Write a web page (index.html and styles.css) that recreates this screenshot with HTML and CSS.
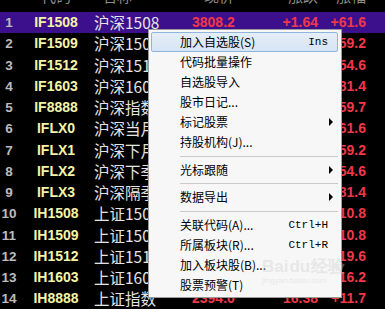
FILE: index.html
```html
<!DOCTYPE html>
<html>
<head>
<meta charset="utf-8">
<link rel="stylesheet" href="styles.css">
</head>
<body>
<div class="screen">
  <div class="head">
    <span class="h-num"></span><span class="h-code">代码</span><span class="h-name">名称</span><span class="h-price">现价</span><span class="h-chg">涨跌</span><span class="h-pct">涨幅</span>
  </div>
  <div class="row sel"><span class="num">1</span><span class="code">IF1508</span><span class="name">沪深1508</span><span class="price">3808.2</span><span class="chg">+1.64</span><span class="pct">+61.6</span></div>
  <div class="row"><span class="num">2</span><span class="code">IF1509</span><span class="name">沪深1509</span><span class="price">3796.2</span><span class="chg">+1.58</span><span class="pct">+59.2</span></div>
  <div class="row"><span class="num">3</span><span class="code">IF1512</span><span class="name">沪深1512</span><span class="price">3779.6</span><span class="chg">+1.47</span><span class="pct">+54.6</span></div>
  <div class="row"><span class="num">4</span><span class="code">IF1603</span><span class="name">沪深1603</span><span class="price">3785.0</span><span class="chg">+2.19</span><span class="pct">+81.4</span></div>
  <div class="row"><span class="num">5</span><span class="code">IF8888</span><span class="name">沪深指数</span><span class="price">3803.4</span><span class="chg">+1.60</span><span class="pct">+59.7</span></div>
  <div class="row"><span class="num">6</span><span class="code">IFLX0</span><span class="name">沪深当月</span><span class="price">3808.2</span><span class="chg">+1.64</span><span class="pct">+61.6</span></div>
  <div class="row"><span class="num">7</span><span class="code">IFLX1</span><span class="name">沪深下月</span><span class="price">3796.2</span><span class="chg">+1.58</span><span class="pct">+59.2</span></div>
  <div class="row"><span class="num">8</span><span class="code">IFLX2</span><span class="name">沪深下季</span><span class="price">3779.6</span><span class="chg">+1.47</span><span class="pct">+54.6</span></div>
  <div class="row"><span class="num">9</span><span class="code">IFLX3</span><span class="name">沪深隔季</span><span class="price">3785.0</span><span class="chg">+2.19</span><span class="pct">+81.4</span></div>
  <div class="row"><span class="num">10</span><span class="code">IH1508</span><span class="name">上证1508</span><span class="price">2401.6</span><span class="chg">+0.45</span><span class="pct">+10.8</span></div>
  <div class="row"><span class="num">11</span><span class="code">IH1509</span><span class="name">上证1509</span><span class="price">2398.8</span><span class="chg">+0.45</span><span class="pct">+10.8</span></div>
  <div class="row"><span class="num">12</span><span class="code">IH1512</span><span class="name">上证1512</span><span class="price">2396.0</span><span class="chg">+0.82</span><span class="pct">+19.6</span></div>
  <div class="row"><span class="num">13</span><span class="code">IH1603</span><span class="name">上证1603</span><span class="price">2395.4</span><span class="chg">+0.68</span><span class="pct">+16.2</span></div>
  <div class="row"><span class="num">14</span><span class="code">IH8888</span><span class="name">上证指数</span><span class="price">2394.0</span><span class="chg">16.38</span><span class="pct">+11.7</span></div>

  <div class="menu">
    <div class="item hot"><span>加入自选股(S)</span><span class="key">Ins</span></div>
    <div class="item"><span>代码批量操作</span></div>
    <div class="item"><span>自选股导入</span></div>
    <div class="item"><span>股市日记...</span></div>
    <div class="item sub"><span>标记股票</span><span class="arrow"></span></div>
    <div class="item"><span>持股机构(J)...</span></div>
    <div class="sep"></div>
    <div class="item sub"><span>光标跟随</span><span class="arrow"></span></div>
    <div class="sep tight"></div>
    <div class="item sub"><span>数据导出</span><span class="arrow"></span></div>
    <div class="sep"></div>
    <div class="item"><span>关联代码(A)...</span><span class="key">Ctrl+H</span></div>
    <div class="item"><span>所属板块(R)...</span><span class="key">Ctrl+R</span></div>
    <div class="item"><span>加入板块股(B)...</span></div>
    <div class="item"><span>股票预警(T)</span></div>
  </div>
  <div class="mark">Bai<span class="paw">du</span>经验<div class="mark-url">jingyan.baidu.com</div></div>
</div>
</body>
</html>
```

FILE: styles.css
```css
html, body {
  margin: 0;
  padding: 0;
  background: #000;
}
.screen {
  position: relative;
  width: 385px;
  height: 309px;
  overflow: hidden;
  background: #000;
}
.head, .row {
  display: grid;
  grid-template-columns: 18px 76px 98px 42px 84px 48px 1fr;
  align-items: center;
}
.head {
  height: 12px;
  overflow: hidden;
  color: #8c8c8c;
  font-family: "Noto Sans CJK SC", sans-serif;
  font-size: 15px;
  line-height: 12px;
}
.head span {
  position: relative;
  top: -10px;
}
.h-code { text-align: center; }
.h-name { padding-left: 8px; }
.h-price, .h-chg, .h-pct { text-align: right; }
.row {
  height: 21.25px;
  font-family: "Liberation Sans", Arial, sans-serif;
  font-size: 14px;
  line-height: 21px;
  white-space: nowrap;
}
.row.sel {
  background: #3c108c;
}
.num {
  color: #bcbcbc;
  font-size: 13.5px;
  font-weight: bold;
  text-align: center;
}
.code {
  color: #f4f4a8;
  font-weight: bold;
  text-align: center;
}
.name {
  color: #e4e4e4;
  font-family: "Noto Sans CJK SC", sans-serif;
  font-size: 15.5px;
  overflow: hidden;
}
.price, .chg, .pct {
  color: #f0384a;
  font-weight: bold;
  text-align: right;
}
.menu {
  position: absolute;
  left: 148px;
  top: 29px;
  width: 187px;
  padding: 2px 3px 2px 2px;
  background: #f7f7f7;
  border: 1px solid #9a9a9a;
  font-family: "Noto Sans CJK SC", sans-serif;
  font-size: 12px;
  color: #000;
}
.item {
  position: relative;
  display: flex;
  justify-content: space-between;
  align-items: center;
  height: 20px;
  padding: 0 10px 0 29px;
  box-sizing: border-box;
  line-height: 20px;
}
.item.hot {
  background: linear-gradient(#e6eef8, #d6e4f4);
  border: 1px solid #8fb4de;
  border-radius: 2px;
  padding: 0 9px 0 28px;
}
.key {
  font-family: "Liberation Mono", monospace;
  font-size: 11px;
}
.arrow {
  position: absolute;
  right: 5px;
  top: 6px;
  width: 0;
  height: 0;
  border-top: 4px solid transparent;
  border-bottom: 4px solid transparent;
  border-left: 4px solid #000;
}
.sep {
  height: 8px;
  margin-left: 29px;
  display: flex;
  align-items: center;
}
.sep::after {
  content: "";
  flex: 1;
  height: 1px;
  background: #cacaca;
}
.sep.tight {
  height: 7px;
}
.mark {
  position: absolute;
  left: 262px;
  top: 258px;
  color: rgba(205, 205, 205, 0.4);
  font-family: "Liberation Sans", sans-serif;
  font-size: 17px;
  font-weight: bold;
  line-height: 18px;
  white-space: nowrap;
}
.paw {
  margin: 0 1px;
}
.mark-url {
  font-size: 8px;
  font-weight: normal;
  line-height: 10px;
}
```
